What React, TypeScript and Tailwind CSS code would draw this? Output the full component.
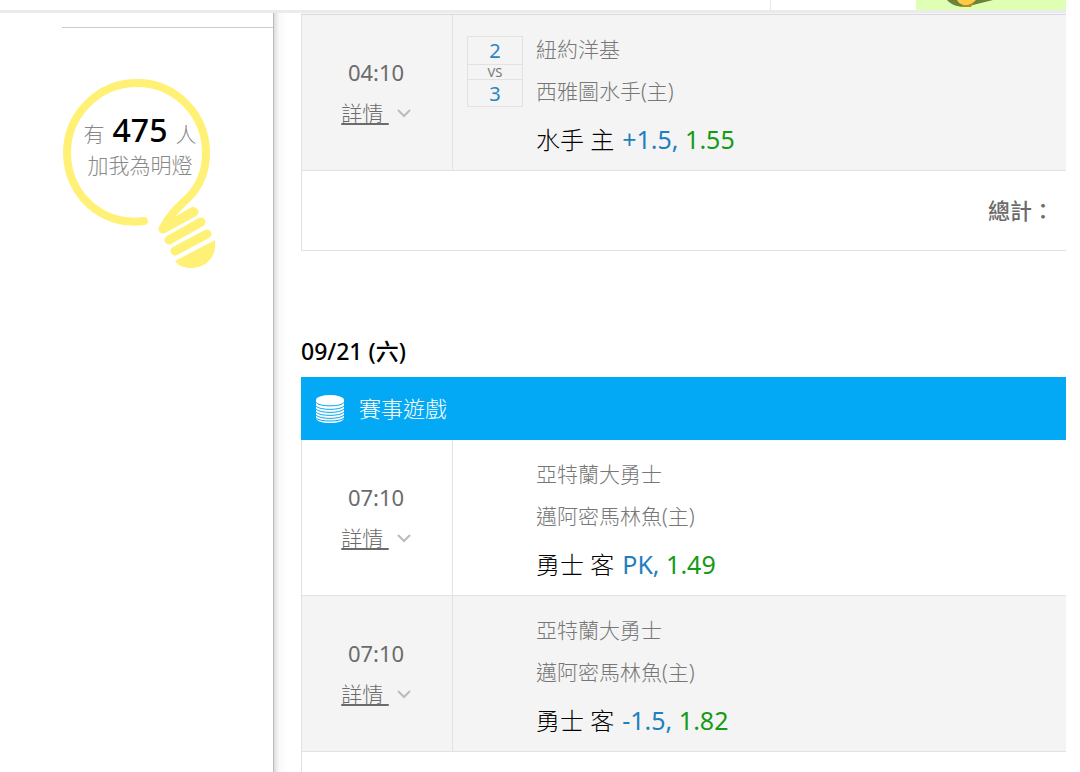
import React from 'react';

type Pick = {
  time: string;
  away: string;
  home: string;
  score?: [number, number];
  team: string;
  line: string;
  odds: string;
};

const finished: Pick[] = [
  { time: '04:10', away: '紐約洋基', home: '西雅圖水手(主)', score: [2, 3], team: '水手 主', line: '+1.5,', odds: '1.55' },
];

const upcoming: Pick[] = [
  { time: '07:10', away: '亞特蘭大勇士', home: '邁阿密馬林魚(主)', team: '勇士 客', line: 'PK,', odds: '1.49' },
  { time: '07:10', away: '亞特蘭大勇士', home: '邁阿密馬林魚(主)', team: '勇士 客', line: '-1.5,', odds: '1.82' },
];

const Bulb = () => (
  <svg className="block" width="156" height="194" viewBox="0 0 156 194" fill="none" stroke="#fff176" strokeLinecap="round" strokeLinejoin="round">
    <path
      strokeWidth="8"
      d="M82 143C41 149 5 117 5 75C5 37 36 5 75 5C114 5 144 37 144 75C144 94 137 109 126 120C114 131 107 138 101 150L131 133"
    />
    <path strokeWidth="9" d="M101 151L132 134M107 162L139 144M113 173L145 156" />
    <path fill="#fff176" stroke="none" d="M113 183L153 162C155 178 145 190 129 190C122 190 117 188 113 183Z" />
  </svg>
);

const Coins = () => (
  <svg width="30" height="30" viewBox="0 0 30 30">
    <path fill="#fff" d="M1 6H29V24C29 27 23 29 15 29C7 29 1 27 1 24Z" />
    <ellipse cx="15" cy="6" rx="14" ry="5" fill="#fff" />
    <g fill="none" stroke="#03a9f4" strokeWidth="1">
      <path d="M1 8.500C4 13 26 13 29 8.500" />
      <path d="M1 12C4 16.500 26 16.500 29 12" />
      <path d="M1 15C4 19.500 26 19.500 29 15" />
      <path d="M1 18C4 22.500 26 22.500 29 18" />
      <path d="M1 21C4 25.500 26 25.500 29 21" />
      <path d="M1 24C4 28 26 28 29 24" />
    </g>
  </svg>
);

const Score = ({ score }: { score: [number, number] }) => (
  <div className="w-14 border border-[#e2e2e2] text-center font-normal">
    <div className="h-[27px] text-[20px] leading-[27px] text-[#2a86c0]">{score[0]}</div>
    <div className="h-4 border-y border-[#e2e2e2] text-[13px] leading-[14px] text-[#777]">VS</div>
    <div className="h-[26px] text-[20px] leading-[28px] text-[#2a86c0]">{score[1]}</div>
  </div>
);

const Row = ({ pick, shaded }: { pick: Pick; shaded?: boolean }) => (
  <tr className={`border-b border-[#e2e2e2] ${shaded ? 'bg-[#f4f4f4]' : 'bg-white'}`}>
    <td className="border-x border-[#e2e2e2] p-0 pr-[2px] text-center text-[22px] leading-[40px] text-[#6b6b6b]">
      <div className="font-normal">{pick.time}</div>
      <button className="inline-flex items-center gap-2 text-[21px]">
        <span className="whitespace-pre underline underline-offset-2">詳情 </span>
        <svg width="14" height="9" viewBox="0 0 14 9" fill="none" stroke="#bbb" strokeWidth="2">
          <path d="M1 1L7 7L13 1" />
        </svg>
      </button>
    </td>
    <td className="p-0">
      <div className="flex h-[155px] gap-[13px] pl-[14px] pt-[13px]">
        <div className="w-14 pt-2">{pick.score && <Score score={pick.score} />}</div>
        <div className="text-[21px] leading-[42px] text-[#777]">
          <div>{pick.away}</div>
          <div>{pick.home}</div>
          <div className="pt-1 text-[24px] leading-[46px] text-black">
            {pick.team}
            <span className="pl-2 text-[25px] font-normal">
              <span className="text-[#1f7fc0]">{pick.line}</span>{' '}
              <span className="text-[#159a15]">{pick.odds}</span>
            </span>
          </div>
        </div>
      </div>
    </td>
  </tr>
);

const PickTable = ({ picks, shadeFrom, children }: { picks: Pick[]; shadeFrom: number; children?: React.ReactNode }) => (
  <table className="w-full table-fixed border-collapse">
    <colgroup>
      <col className="w-[151px]" />
      <col />
    </colgroup>
    <tbody>
      {picks.map((p, i) => <Row key={i} pick={p} shaded={i >= shadeFrom} />)}
      {children}
    </tbody>
  </table>
);

export default function App() {
  return (
    <div className="h-screen overflow-hidden bg-white font-['Noto_Sans','Noto_Sans_CJK_TC',sans-serif] font-light">
      {/* site header */}
      <header className="mr-[14px] flex h-[10px] justify-end overflow-hidden">
        <div className="w-[146px] border-l border-[#e6e6e6]" />
        <div className="w-[150px] bg-[#dfffb5]">
          <svg className="ml-[31px]" width="46" height="10" viewBox="0 0 46 10">
            <path fill="#6b8238" d="M0 0C5 6 16 9 26 5L46 0Z" />
            <path fill="#ffca45" d="M10 0C13 7 23 7 29 0Z" />
            <path fill="#c58b20" d="M12 2C17 7 23 6 27 2L24 7H17Z" />
          </svg>
        </div>
      </header>
      <div className="mr-[14px] h-[3px] bg-[#ebebeb]" />

      <div className="flex">
        {/* follower count */}
        <aside className="w-[273px] shrink-0 pl-[62px] pt-[14px]">
          <hr className="border-[#ccc]" />
          <div className="relative mt-[50px] w-[156px]">
            <Bulb />
            <div className="absolute inset-x-0 top-9 text-center text-[21px] leading-[31px] text-[#888]">
              <div className="flex items-baseline justify-center gap-2">
                有 <strong className="text-[32px] font-medium text-black">475</strong> 人
              </div>
              <div>加我為明燈</div>
            </div>
          </div>
        </aside>
        <div className="h-screen w-[14px] shrink-0 border-l border-[#bbb] bg-gradient-to-r from-[#ddd] via-[#f9f9f9] via-40% to-white" />

        <main className="ml-[14px] mr-[14px] min-w-0 flex-1">
          <div className="h-[2px] border-b border-[#dcd8e0] bg-[#f4f4f4]" />
          <PickTable picks={finished} shadeFrom={0}>
            <tr className="border-b border-l border-[#e2e2e2]">
              <td colSpan={2} className="h-20 p-0 pr-3 text-right text-[22px] font-medium text-[#6b6b6b]">總計：</td>
            </tr>
          </PickTable>

          <h2 className="mt-20 text-[23px] font-medium leading-[40px] text-black">09/21 (六)</h2>
          <div className="mt-[6px] flex h-[63px] items-center gap-[14px] bg-[#03a9f4] pl-[14px] text-[22px] text-white">
            <Coins />
            賽事遊戲
          </div>
          <PickTable picks={upcoming} shadeFrom={1}>
            <tr className="border-l border-[#e2e2e2]">
              <td colSpan={2} className="h-20 p-0" />
            </tr>
          </PickTable>
        </main>
      </div>
    </div>
  );
}
